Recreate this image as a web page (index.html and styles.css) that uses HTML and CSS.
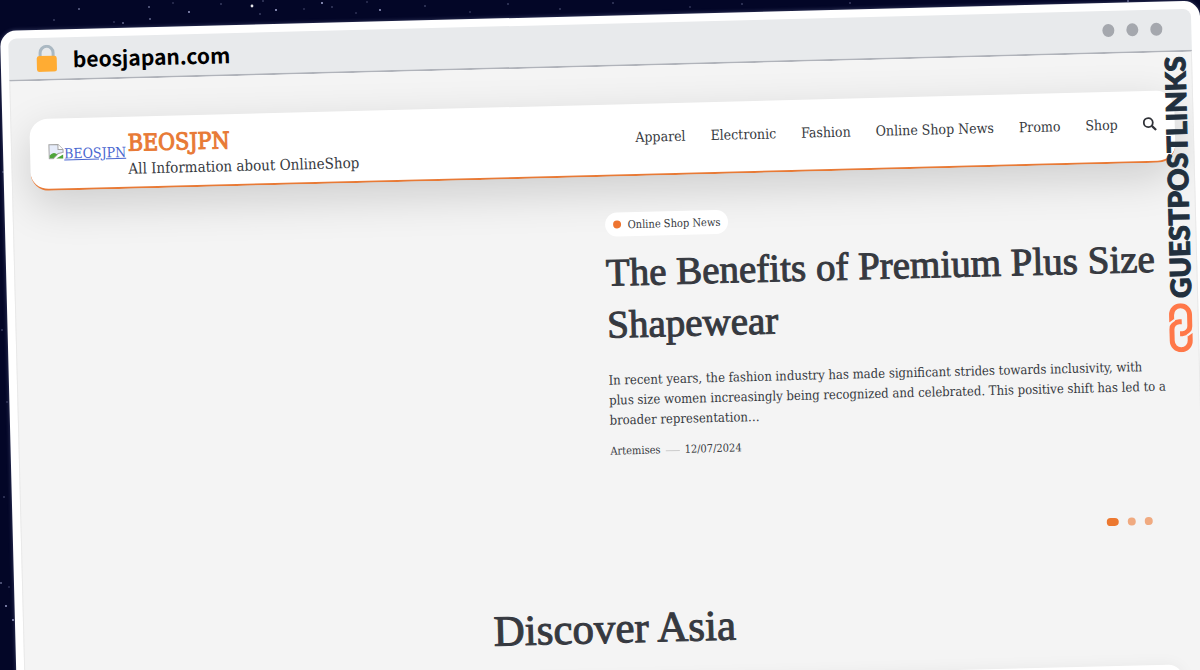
FILE: index.html
```html
<!DOCTYPE html>
<html lang="en">
<head>
<meta charset="utf-8">
<meta name="viewport" content="width=device-width, initial-scale=1">
<title>beosjapan.com</title>
<link rel="stylesheet" href="styles.css">
</head>
<body>
<svg class="stars" aria-hidden="true" fill="#b9bde8">
  <g opacity=".9"><circle cx="252" cy="6" r="1.4" fill="#fff"/><circle cx="276" cy="10" r="1"/><circle cx="322" cy="3" r="1"/><circle cx="79" cy="9" r=".8"/><circle cx="149" cy="7" r=".8"/><circle cx="150" cy="19" r=".8"/><circle cx="189" cy="12" r=".9"/><circle cx="123" cy="23" r=".8"/><circle cx="380" cy="10" r=".9"/><circle cx="13" cy="193" r=".6"/><circle cx="13" cy="620" r=".9"/><circle cx="6" cy="606" r=".9"/><circle cx="1" cy="583" r=".8"/><circle cx="1128" cy="1" r=".8"/></g>
  <g opacity=".5"><circle cx="54" cy="20" r=".8"/><circle cx="114" cy="22" r=".7"/><circle cx="173" cy="3" r=".7"/><circle cx="221" cy="4" r=".8"/><circle cx="263" cy="1" r=".8"/><circle cx="260" cy="14" r=".8"/><circle cx="304" cy="9" r=".7"/><circle cx="332" cy="7" r=".8"/><circle cx="356" cy="13" r=".7"/><circle cx="367" cy="2" r=".7"/><circle cx="425" cy="6" r=".8"/><circle cx="470" cy="12" r=".7"/><circle cx="508" cy="4" r=".8"/><circle cx="560" cy="9" r=".8"/><circle cx="613" cy="3" r=".8"/><circle cx="690" cy="7" r=".7"/><circle cx="742" cy="4" r=".8"/><circle cx="850" cy="3" r=".8"/><circle cx="3" cy="172" r=".8"/><circle cx="2" cy="330" r=".8"/><circle cx="7" cy="402" r=".7"/><circle cx="4" cy="497" r=".8"/><circle cx="9" cy="587" r=".7"/></g>
</svg>
<div class="window">
  <div class="bar">
    <svg class="lock" viewBox="0 0 22 27" aria-hidden="true"><path d="M4.500 13V8a6.500 6.500 0 0 1 13 0v5" fill="none" stroke="#aab8c2" stroke-width="3"/><rect x="1" y="11" width="20" height="16" rx="2.500" fill="#ffac33"/></svg>
    <span class="address">beosjapan.com</span>
    <span class="controls"><i></i><i></i><i></i></span>
  </div>
  <div class="page">
    <header class="site-header">
      <a class="logo" href="#"><svg viewBox="0 0 16 16" aria-hidden="true"><path d="M1 1h9l5 5v3l-5 1-5 5H1z" fill="#e6ecfa" stroke="#a3a3a3"/><path d="M10 1v5h5" fill="#fff" stroke="#a3a3a3"/><path d="M1.500 14.500V12c3-4 6-3 7.500-1l-4 3.500z" fill="#4da53a"/><path d="M15 11v4H8z" fill="#4da53a"/></svg><span>BEOSJPN</span></a>
      <div class="brand">
        <a class="site-title" href="#">BEOSJPN</a>
        <p class="tagline">All Information about OnlineShop</p>
      </div>
      <nav class="menu">
        <a href="#">Apparel</a><a href="#">Electronic</a><a href="#">Fashion</a><a href="#">Online Shop News</a><a href="#">Promo</a><a href="#">Shop</a>
        <button class="search" type="button" aria-label="Search"><svg viewBox="0 0 14 14" aria-hidden="true" fill="none" stroke="#303238" stroke-width="1.800"><circle cx="5.600" cy="5.600" r="4.500"/><path d="M9 9l4.300 4.300" stroke-width="2.200"/></svg></button>
      </nav>
    </header>
    <main>
      <section class="hero">
        <article class="post">
          <a class="tag" href="#">Online Shop News</a>
          <h1>The Benefits of Premium Plus Size Shapewear</h1>
          <p class="excerpt">In recent years, the fashion industry has made significant strides towards inclusivity, with<br>plus size women increasingly being recognized and celebrated. This positive shift has led to a broader representation…</p>
          <p class="meta"><span>Artemises</span><span class="dash"></span><time datetime="2024-07-12">12/07/2024</time></p>
        </article>
      </section>
      <div class="pager">
        <button class="current" type="button" aria-label="Slide 1"></button><button type="button" aria-label="Slide 2"></button><button type="button" aria-label="Slide 3"></button>
      </div>
      <h2>Discover Asia</h2>
      <div class="panel"></div>
    </main>
  </div>
  <div class="watermark">
    <span>GUESTPOSTLINKS</span>
    <svg viewBox="0 0 24 49" aria-hidden="true" fill="none" stroke="#ff7849" stroke-width="5"><path d="M3 19V11.500a9 9 0 0 1 18 0V23a7.500 7.500 0 0 1-7.500 7.500H11"/><path d="M21 30v7.500a9 9 0 0 1-18 0V26a7.500 7.500 0 0 1 7.500-7.500H13"/><path d="M0 20.500l6-4M18 32.500l6-4" stroke="#f4f4f4" stroke-width="2"/></svg>
  </div>
</div>
</body>
</html>
```
FILE: styles.css
```css
* { box-sizing: border-box; }

body {
  margin: 0;
  height: 100vh;
  overflow: hidden;
  background: #030627;
  color: #363940;
  font-family: "DejaVu Serif Condensed", "DejaVu Serif", serif;
}

a { color: inherit; text-decoration: none; }
p, h1, h2 { margin: 0; }
button { padding: 0; border: 0; background: none; }

.stars { position: absolute; top: 0; left: 0; width: 100%; height: 100%; }

.window {
  position: relative;
  margin-top: 31px;
  padding: 8px 9px 8px 8px;
  border-radius: 16px;
  background: #fff;
  box-shadow: 0 0 4px rgba(200, 205, 255, .3);
  transform: rotate(-1.45deg);
  transform-origin: top left;
}

.bar {
  display: flex;
  align-items: center;
  height: 43px;
  padding: 0 29px 0 27px;
  border-bottom: 2px solid #b0b3ba;
  border-radius: 8px 8px 0 0;
  background: #e8eaec;
}
.lock { width: 22px; height: 27px; }
.address {
  margin-left: 15px;
  color: #000;
  font: bold 21px/32px "Noto Sans CJK JP", sans-serif;
}
.controls { display: flex; gap: 12px; margin-left: auto; padding-bottom: 3px; }
.controls i { width: 12px; height: 13px; border-radius: 50%; background: #a5a8ae; }

.page {
  padding: 38px 18px 0;
  border: solid #e9e9e9;
  border-width: 0 1px;
  background: #f4f4f4;
  overflow: hidden;
}

.site-header {
  display: flex;
  align-items: center;
  height: 72px;
  padding: 0 18px;
  border-bottom: 2px solid #e87a36;
  border-radius: 18px;
  background: #fff;
  box-shadow: 0 14px 44px rgba(0, 0, 0, .16);
}
.logo { display: flex; color: #4966d0; font-size: 14px; line-height: 20px; }
.logo svg { width: 16px; height: 16px; }
.logo span { text-decoration: underline; }
.brand { padding: 6px 0 0 2px; }
.site-title { display: block; color: #e87a36; font-size: 23px; line-height: 28px; -webkit-text-stroke: 1px; }
.tagline { font-size: 15px; line-height: 24px; }
.menu { display: flex; align-items: center; gap: 25px; margin-left: auto; padding-bottom: 4px; font-size: 14px; white-space: nowrap; }
.search { width: 14px; height: 14px; }
.search svg { display: block; }

.hero { display: grid; grid-template-columns: 1fr 1fr; padding-top: 36px; }
.post { grid-column: 2; }
.tag {
  display: inline-flex;
  align-items: center;
  gap: 7px;
  height: 24px;
  padding: 0 8px;
  border-radius: 12px;
  background: #fff;
  font-size: 11px;
}
.tag::before { content: ""; width: 8px; height: 8px; border-radius: 50%; background: #ee7430; }
h1, h2 { font-family: "Liberation Serif", serif; font-weight: 400; line-height: 52px; -webkit-text-stroke: 1px; }
h1 { margin-top: 10px; font-size: 39px; }
.excerpt { margin-top: 20px; font-size: 13px; line-height: 20px; }
.meta { display: flex; align-items: center; gap: 5px; margin-top: 12px; font-size: 11px; line-height: 18px; }
.dash { width: 14px; height: 1px; background: #ccc; }

.pager { display: flex; justify-content: flex-end; gap: 9px; margin: 70px 32px 0 0; }
.pager button { width: 8px; height: 8px; border-radius: 4px; background: #f0aa80; }
.pager .current { width: 12px; background: #ec7830; }

h2 { margin-top: 64px; text-align: center; font-size: 43px; }
.panel {
  height: 40px;
  margin: 24px 6px 0 0;
  border-radius: 14px 14px 0 0;
  background: #fff;
  box-shadow: 0 0 16px rgba(0, 0, 0, .05);
}

.watermark {
  position: absolute;
  top: 55px;
  right: 13px;
  display: flex;
  flex-direction: column;
  align-items: center;
  gap: 5px;
  color: #22303e;
  font: 900 28px/28px Lato, sans-serif;
  -webkit-text-stroke: 1px;
}
.watermark span { writing-mode: vertical-rl; transform: rotate(180deg); }
.watermark svg { width: 24px; height: 49px; }
```
